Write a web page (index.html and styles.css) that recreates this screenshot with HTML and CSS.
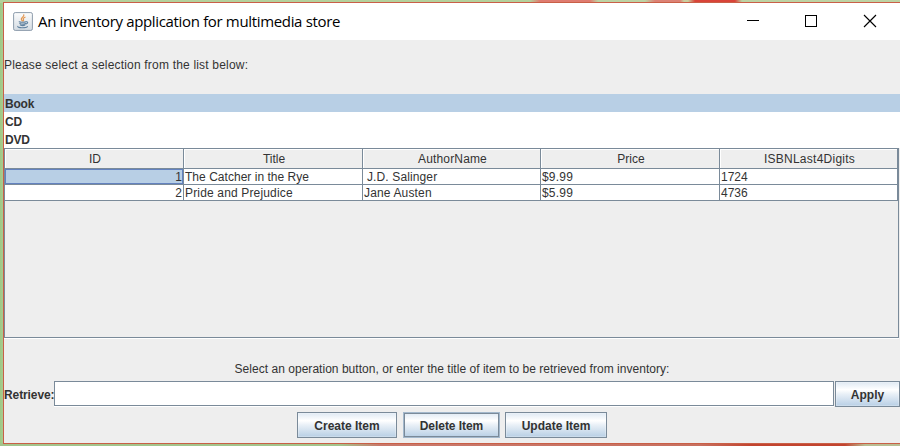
FILE: index.html
```html
<!DOCTYPE html>
<html lang="en">
<head>
<meta charset="utf-8">
<title>An inventory application for multimedia store</title>
<link rel="stylesheet" href="styles.css">
</head>
<body>
<div class="window">
  <header class="titlebar">
    <svg class="app-icon" width="20" height="19" viewBox="0 0 20 19">
      <defs><linearGradient id="face" x1="0" y1="0" x2="0" y2="1"><stop offset="0" stop-color="#fdfdfd"/><stop offset="1" stop-color="#d3dbe3"/></linearGradient></defs>
      <rect x=".6" y=".6" width="18.8" height="17.8" rx="1.6" fill="url(#face)" stroke="#8d9cac"/>
      <g fill="none" stroke-linecap="round">
        <path d="M10.8 2.8c.8 2-3.3 2.7-2.4 4.7.2.7.8 1 .9 1.5M12 5.2c-2 .8-2.1 1.6-1.5 2.3.4.6 0 1-.4 1.5" stroke="#e2954e" stroke-width="1.2"/>
        <path d="M6.2 9.8c1.5.7 5.4.6 6.8 0M6.8 11.5c1.5.7 4.5.6 5.8 0M7.3 13c1.4.6 3.6.6 4.6 0M13.2 9.8c2-.4 2 1.6-.2 2.2M4.8 14.4c-.8 1.7 8.5 1.7 9.6.2" stroke="#5f819f" stroke-width="1.1"/>
      </g>
    </svg>
    <h1 class="title">An inventory application for multimedia store</h1>
    <svg class="controls" width="132" height="16" viewBox="0 0 132 16" fill="none" stroke="#000" shape-rendering="crispEdges">
      <path d="M0 7.5h12"/>
      <rect x="58.5" y="2.5" width="11" height="11"/>
      <path d="M117 2l12 12M129 2l-12 12" shape-rendering="auto" stroke-width="1.15"/>
    </svg>
  </header>
  <p class="prompt"><span class="prompt-text">Please select a selection from the list below:</span></p>
  <ul class="types">
    <li class="selected">Book</li>
    <li>CD</li>
    <li>DVD</li>
  </ul>
  <div class="scroll-pane">
    <div class="grid">
      <div class="head">ID</div><div class="head">Title</div><div class="head"><span class="author">AuthorName</span></div><div class="head">Price</div><div class="head"><span class="isbn">ISBNLast4Digits</span></div>
      <div class="cell num focused">1</div><div class="cell"><span class="catcher">The Catcher in the Rye</span></div><div class="cell"><span class="salinger">J.D. Salinger</span></div><div class="cell price">$9.99</div><div class="cell">1724</div>
      <div class="cell num">2</div><div class="cell"><span class="pride">Pride and Prejudice</span></div><div class="cell"><span class="austen">Jane Austen</span></div><div class="cell price">$5.99</div><div class="cell">4736</div>
    </div>
  </div>
  <p class="hint"><span class="hint-text">Select an operation button, or enter the title of item to be retrieved from inventory:</span></p>
  <div class="retrieve">
    <label class="label" for="query">Retrieve:</label>
    <input class="field" id="query" type="text">
    <button class="btn apply">Apply</button>
  </div>
  <div class="actions">
    <button class="btn create">Create Item</button>
    <button class="btn delete">Delete Item</button>
    <button class="btn update">Update Item</button>
  </div>
</div>
</body>
</html>
```
FILE: styles.css
```css
* { box-sizing: border-box; margin: 0; padding: 0; }
body {
  width: 900px; height: 446px; overflow: hidden; padding: 2px 0 0 3px;
  font: 12px/18px "Liberation Sans", Arial, sans-serif; color: #333;
  background:
    linear-gradient(90deg, #b4d19c 0 530px, #df7c70 540px 590px, #bdd3a4 598px 645px, #dc8275 655px 680px, #c9cfa0 684px 688px, #d94439 695px 735px, #bdd3a4 742px) 0 0 / 900px 3px no-repeat,
    linear-gradient(90deg, #a3c48c 0 340px, #c9786a 380px 440px, #c8705f 700px, #c2442f 750px 845px, #b9bd92 865px) 0 443px / 900px 3px no-repeat,
    linear-gradient(90deg, #9dcb83, #abc993 3px);
}
.window { width: 897px; height: 442px; border: solid #c95f47; border-width: 1px 0 1px 1px; background: #eee; display: flex; flex-direction: column; }
.titlebar { height: 37px; flex: none; background: #fff; display: flex; align-items: center; padding: 0 21px 0 9px; }
.app-icon { flex: none; margin-top: -1px; }
.title { font: 400 15px/20px "Open Sans", "Noto Sans", sans-serif; color: #000; margin: -2px 0 0 5px; white-space: nowrap; letter-spacing: -.34px; }
.controls { flex: none; margin-left: auto; margin-top: -1px; }
.prompt { height: 54px; flex: none; padding-top: 16px; white-space: nowrap; }
.prompt-text { letter-spacing: .19px; }
.types { height: 54px; flex: none; list-style: none; background: #fff; font-weight: 700; letter-spacing: -.2px; }
.types li { height: 18px; padding: 1px 0 0 1px; line-height: 18px; }
.types .selected { background: #b8cfe5; }
.scroll-pane { width: 895px; height: 190px; flex: none; border: 1px solid #7a8a99; box-shadow: 0 1px #fff; }
.grid { width: 893px; display: grid; grid-template-columns: 179px 179px 178px 179px 178px; grid-template-rows: 20px 16px 16px; }
.head { border: solid #7a8a99; border-width: 0 1px 1px 0; text-align: center; line-height: 21px; box-shadow: inset 1px 1px #fff; padding-left: 2px; }
.author { letter-spacing: .15px; }
.isbn { letter-spacing: .25px; }
.cell { border: solid #7a8a99; border-width: 0 1px 1px 0; background: #fff; line-height: 16px; padding-left: 1px; white-space: pre; overflow: hidden; }
.num { text-align: right; padding-right: 1px; }
.focused { background: #b8cfe5; box-shadow: inset 0 0 0 1px #6382bf; }
.catcher { letter-spacing: .03px; }
.pride { letter-spacing: .16px; }
.austen { letter-spacing: .15px; }
.salinger { margin-left: 3px; letter-spacing: .12px; }
.price { letter-spacing: .2px; }
.hint { height: 43px; flex: none; padding-top: 22px; text-align: center; white-space: nowrap; }
.hint-text { letter-spacing: .03px; }
.retrieve { height: 26px; flex: none; display: flex; }
.label { width: 50px; flex: none; font-weight: 700; line-height: 28px; white-space: nowrap; letter-spacing: -.1px; }
.field { width: 780px; height: 25px; flex: none; border: 1px solid #7a8a99; background: #fff; box-shadow: 0 1px #fff; font: inherit; outline: none; }
.btn { height: 26px; flex: none; border: 1px solid #7a8a99; padding-top: 1px; font: 700 12px/24px "Liberation Sans", Arial, sans-serif; color: #333; white-space: nowrap; background: linear-gradient(#dfe9f3, #fff 32%, #e9f0f7 50%, #b8cfe5); box-shadow: inset 0 0 0 1px #ffffff40; }
.apply { width: 65px; margin-left: 1px; }
.actions { display: flex; padding: 5px 0 0 293px; }
.create { width: 100px; }
.delete { width: 97px; margin: 0 5px 0 6px; border: 1px solid #a3b8cc; box-shadow: inset 0 0 0 1px #7a8a99; letter-spacing: -.05px; }
.update { width: 102px; }
```
